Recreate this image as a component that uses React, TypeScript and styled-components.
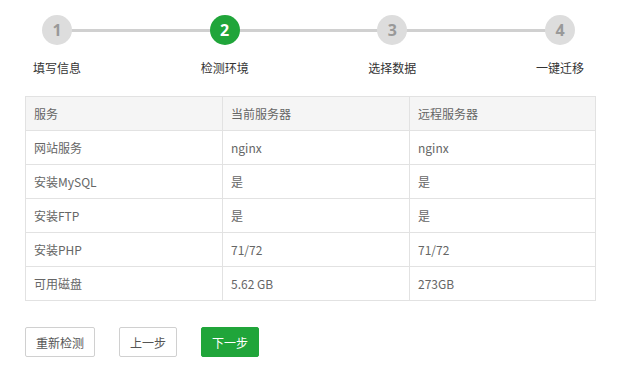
import React from "react";
import styled, { createGlobalStyle } from "styled-components";

const Global = createGlobalStyle`
  html, body { margin: 0; padding: 0; background: #fff; }
  body { font-family: "Microsoft YaHei", "Noto Sans CJK SC", sans-serif; font-size: 12px; color: #666; }
`;

const Page = styled.div`
  width: 641px;
  height: 381px;
  padding: 15px 0 0 25px;
  box-sizing: border-box;
`;

const Steps = styled.div`
  position: relative;
  display: flex;
  justify-content: space-between;
  width: 563px;
  margin-left: 2px;
  &::before {
    content: "";
    position: absolute;
    left: 30px;
    right: 30px;
    top: 14px;
    height: 3px;
    background: #d0d0d0;
  }
`;

const Step = styled.div`
  position: relative;
  width: 60px;
  display: flex;
  flex-direction: column;
  align-items: center;
`;

const Circle = styled.div<{ $active?: boolean }>`
  width: 30px;
  height: 30px;
  border-radius: 50%;
  background: ${(p) => (p.$active ? "#20a53a" : "#dddddd")};
  color: ${(p) => (p.$active ? "#fff" : "#999")};
  font-family: "Open Sans", "Noto Sans", sans-serif;
  font-weight: 700;
  font-size: 16px;
  display: flex;
  align-items: center;
  justify-content: center;
`;

const Label = styled.div`
  margin-top: 15px;
  font-size: 12px;
  line-height: 16px;
  color: #333;
  white-space: nowrap;
`;

const Table = styled.table`
  margin-top: 20px;
  width: 570px;
  border-collapse: collapse;
  table-layout: fixed;
  font-size: 12px;
  color: #666;
`;

const Th = styled.th`
  background: #f5f5f5;
  font-weight: normal;
  text-align: left;
  height: 33px;
  padding: 0 8px;
  border: 1px solid #e2e2e2;
`;

const Td = styled.td`
  height: 33px;
  padding: 0 8px;
  border: 1px solid #e2e2e2;
`;

const Actions = styled.div`
  display: flex;
  gap: 24px;
  margin-top: 26px;
`;

const Button = styled.button<{ $primary?: boolean }>`
  height: 30px;
  padding: 0 10px;
  font-family: inherit;
  font-size: 12px;
  border-radius: 2px;
  border: 1px solid ${(p) => (p.$primary ? "#20a53a" : "#d0d0d0")};
  background: ${(p) => (p.$primary ? "#20a53a" : "#fff")};
  color: ${(p) => (p.$primary ? "#fff" : "#555")};
  cursor: pointer;
`;

const steps = ["填写信息", "检测环境", "选择数据", "一键迁移"];

const rows: [string, string, string][] = [
  ["网站服务", "nginx", "nginx"],
  ["安装MySQL", "是", "是"],
  ["安装FTP", "是", "是"],
  ["安装PHP", "71/72", "71/72"],
  ["可用磁盘", "5.62 GB", "273GB"],
];

export default function App() {
  return (
    <Page>
      <Global />
      <Steps>
        {steps.map((s, i) => (
          <Step key={s}>
            <Circle $active={i === 1}>{i + 1}</Circle>
            <Label>{s}</Label>
          </Step>
        ))}
      </Steps>
      <Table>
        <colgroup>
          <col style={{ width: 197 }} />
          <col style={{ width: 187 }} />
          <col style={{ width: 186 }} />
        </colgroup>
        <thead>
          <tr>
            <Th>服务</Th>
            <Th>当前服务器</Th>
            <Th>远程服务器</Th>
          </tr>
        </thead>
        <tbody>
          {rows.map((r) => (
            <tr key={r[0]}>
              <Td>{r[0]}</Td>
              <Td>{r[1]}</Td>
              <Td>{r[2]}</Td>
            </tr>
          ))}
        </tbody>
      </Table>
      <Actions>
        <Button>重新检测</Button>
        <Button>上一步</Button>
        <Button $primary>下一步</Button>
      </Actions>
    </Page>
  );
}
